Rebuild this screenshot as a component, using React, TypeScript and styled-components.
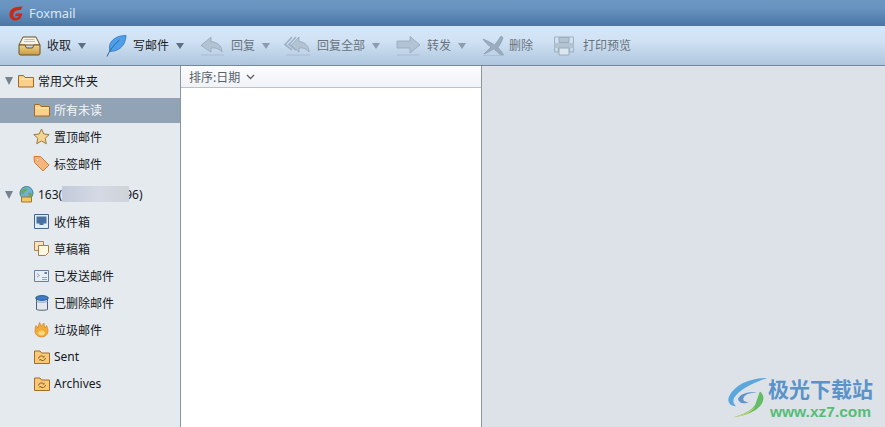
import React from 'react';
import styled, { createGlobalStyle } from 'styled-components';

const GlobalStyle = createGlobalStyle`
  html, body { margin: 0; padding: 0; height: 100%; }
  #root { height: 100%; }
  body { font-family: "Noto Sans", "Noto Sans CJK SC", sans-serif; font-size: 12px; overflow: hidden; }
`;

const Window = styled.div`
  width: 885px;
  height: 427px;
  display: flex;
  flex-direction: column;
  position: relative;
  overflow: hidden;
  background: #dce2e8;
`;

const TitleBar = styled.div`
  height: 26px;
  display: flex;
  align-items: center;
  padding-left: 9px;
  gap: 6px;
  background: linear-gradient(#6c97c3 0%, #6792bf 35%, #4a76a3 100%);
  color: #dbe6f1;
  font-size: 12.8px;
`;

const Toolbar = styled.div`
  height: 39px;
  display: flex;
  align-items: center;
  padding-left: 18px;
  background: linear-gradient(#d7e7f8 0%, #cfe1f3 40%, #afc6de 100%);
  border-bottom: 1px solid #77889a;
`;

const ToolButton = styled.div<{ $width: number }>`
  width: ${(p) => p.$width}px;
  flex: none;
  display: flex;
  align-items: center;
`;

const ToolIcon = styled.span<{ $width: number; $gap: number }>`
  width: ${(p) => p.$width}px;
  margin-right: ${(p) => p.$gap}px;
  height: 24px;
  flex: none;
  display: flex;
  align-items: center;
  justify-content: center;
`;

const ToolLabel = styled.span<{ $disabled?: boolean }>`
  color: ${(p) => (p.$disabled ? '#69737d' : '#1c2126')};
  white-space: nowrap;
  line-height: 16px;
`;

const Caret = styled.span<{ $disabled?: boolean }>`
  width: 0;
  height: 0;
  margin-left: 7px;
  border-left: 4px solid transparent;
  border-right: 4px solid transparent;
  border-top: 6px solid ${(p) => (p.$disabled ? '#8c9cae' : '#5e6f82')};
`;

const Body = styled.div`
  flex: 1;
  display: flex;
  min-height: 0;
`;

const Sidebar = styled.div`
  width: 180px;
  flex: none;
  background: #e5eaef;
  border-right: 1px solid #8a96a3;
  padding-top: 2px;
`;

const Group = styled.div`
  margin-bottom: 5px;
`;

const GroupHead = styled.div<{ $after: number }>`
  height: 25px;
  display: flex;
  align-items: center;
  padding-left: 5px;
  margin-bottom: ${(p) => p.$after}px;
  color: #15191d;
`;

const Arrow = styled.span`
  width: 0;
  height: 0;
  flex: none;
  margin-right: 4px;
  border-left: 4.5px solid transparent;
  border-right: 4.5px solid transparent;
  border-top: 8px solid #76838f;
`;

const HeadIcon = styled.span`
  width: 18px;
  height: 18px;
  flex: none;
  margin-right: 3px;
  display: flex;
  align-items: center;
  justify-content: center;
`;

const FolderRow = styled.div<{ $selected?: boolean }>`
  box-sizing: border-box;
  height: 25px;
  margin-bottom: 2px;
  display: flex;
  align-items: center;
  padding: 0 0 2px 33px;
  gap: 4px;
  background: ${(p) => (p.$selected ? '#91a3b5' : 'transparent')};
  color: ${(p) => (p.$selected ? '#f4f7fa' : '#15191d')};
`;

const RowIcon = styled.span`
  width: 17px;
  height: 18px;
  flex: none;
  display: flex;
  align-items: center;
  justify-content: center;
`;

const Redacted = styled.span`
  display: inline-block;
  position: relative;
  width: 67px;
  height: 16px;
  margin-right: -4px;
  vertical-align: -3px;
  background: linear-gradient(90deg, #c3cada 0%, #d4d9e4 55%, #cfd3d9 100%);
`;

const ListPane = styled.div`
  width: 300px;
  flex: none;
  background: #fff;
  border-right: 1px solid #8a96a3;
`;

const SortBar = styled.div`
  height: 21px;
  display: flex;
  align-items: center;
  gap: 6px;
  padding-left: 8px;
  background: linear-gradient(#fbfcfd, #f0f3f6);
  border-bottom: 1px solid #bcc2c8;
  color: #59626b;
`;

const Preview = styled.div`
  flex: 1;
  background: #dce2e8;
`;

const Watermark = styled.div`
  position: absolute;
  left: 725px;
  top: 375px;
  display: flex;
  align-items: center;
`;

const WatermarkText = styled.div`
  display: flex;
  flex-direction: column;
  margin-left: -3px;
`;

const WatermarkName = styled.span`
  color: #5b93c9;
  font-size: 21px;
  font-weight: 700;
  line-height: 26px;
  font-family: "Noto Sans CJK SC", sans-serif;
`;

const WatermarkUrl = styled.span`
  color: #55bd76;
  font-size: 15.5px;
  font-weight: 700;
  line-height: 18px;
  margin-top: 2px;
  margin-left: 2px;
  font-family: "Liberation Sans", sans-serif;
`;

const FoxLogo = () => (
  <svg width="14" height="15" viewBox="0 0 14 15">
    <path d="M13.500 .5 L8 1 C4 1.400 .8 4 .5 8 C.3 12 3 14.500 6.400 14.500 C10 14.500 12.800 12 13.200 7.500 L7 7.500 L6.200 10 L9.600 10 C9 11.500 8 12 6.800 11.800 C4.900 11.600 4 10.200 4.300 8.300 C4.600 6 6.400 4.600 9 4.200 L12 3.800 Z" fill="#c92a18" />
  </svg>
);

const InboxIcon = () => (
  <svg width="23" height="20" viewBox="0 0 23 20">
    <defs>
      <linearGradient id="tray" x1="0" y1="0" x2="0" y2="1">
        <stop offset="0" stopColor="#efd48a" />
        <stop offset="1" stopColor="#c79a45" />
      </linearGradient>
    </defs>
    <path d="M5 1h13l4 8H1z" fill="#f7f3e6" stroke="#6f4f1f" />
    <path d="M6.500 3.500h10M6 5.500h11" stroke="#bfbfb2" />
    <path d="M1 9h6l1.500 3h6L16 9h6v8.500a1.500 1.500 0 0 1-1.500 1.500h-18A1.500 1.500 0 0 1 1 17.500z" fill="url(#tray)" stroke="#6f4f1f" />
  </svg>
);

const FeatherIcon = () => (
  <svg width="21" height="22" viewBox="0 0 21 22">
    <path d="M20 .5 C13 .5 6.500 3 4 9 C3.200 11.500 3.200 14 4 16.500 C10 16.500 15.500 13.500 18 8.500 C19.500 5.500 20 3 20 .5Z" fill="#4f9fe8" stroke="#2a6cb4" strokeWidth=".7" />
    <path d="M1 21.500 C3.500 15.500 7.500 10 13.500 5" stroke="#2a68a8" strokeWidth="1" fill="none" />
  </svg>
);

const ReplyIcon = () => (
  <svg width="25" height="22" viewBox="0 0 25 22">
    <path d="M11 2 L1 10.500 L11 17 L11 13 C15 12.500 19 13.500 22 17 C22 11 17.500 7 11 6.500Z" fill="#b2c3d4" stroke="#93a8bc" strokeWidth=".8" />
    <path d="M1 20h23" stroke="#a9bbcd" strokeWidth="1.400" opacity=".7" />
  </svg>
);

const ReplyAllIcon = () => (
  <svg width="27" height="22" viewBox="0 0 27 22">
    <path d="M8 2 L1 9.500 L8 15M12 2 L5 9.500 L12 15" fill="none" stroke="#9db1c5" strokeWidth="1.600" />
    <path d="M15 2 L7 10.500 L15 17 L15 13 C19 12.500 22 13.500 25 17 C25 11 21 7 15 6.500Z" fill="#b2c3d4" stroke="#93a8bc" strokeWidth=".8" />
    <path d="M2 20h24" stroke="#a9bbcd" strokeWidth="1.400" opacity=".7" />
  </svg>
);

const ForwardIcon = () => (
  <svg width="25" height="22" viewBox="0 0 25 22">
    <path d="M1 6h13V1.500L24 10l-10 8v-5H1z" fill="#b2c3d4" stroke="#93a8bc" strokeWidth=".8" />
    <path d="M1 20h23" stroke="#a9bbcd" strokeWidth="1.400" opacity=".7" />
  </svg>
);

const DeleteIcon = () => (
  <svg width="23" height="22" viewBox="0 0 23 22">
    <path d="M1 4 C6 6 10 8 12.500 10 C15 7 17 4 19 1 L21 2.500 C20 6.500 18 10 16 12.500 C18 14.500 20 17 21.500 20 L17.500 19 C15 16.500 13 15 11.500 14 C9 15.500 6 17.500 2 19 C5 16 7.500 13.500 9 12 C6 10 3 7.500 1 4Z" fill="#9aacbe" stroke="#8497aa" strokeWidth=".6" />
    <path d="M1 20.500h21" stroke="#a9bbcd" strokeWidth="1" opacity=".7" />
  </svg>
);

const PrintIcon = () => (
  <svg width="22" height="20" viewBox="0 0 22 20">
    <path d="M6 1.500h10v5H6z" fill="#b4c3d2" stroke="#9aabbb" />
    <path d="M1.500 1h19v15h-4v-4h-11v4h-4z" fill="none" stroke="#9fb0c1" strokeWidth="1" />
    <path d="M1.500 7h19v5h-19z" fill="#b4c3d2" />
    <path d="M6 12h10v7H6z" fill="#dce6f0" stroke="#9aabbb" />
  </svg>
);

const FolderIcon = () => (
  <svg width="16" height="14" viewBox="0 0 16 14">
    <path d="M.5 13V1.500h5l1.500 2h8.500V13z" fill="#fbd08a" stroke="#a06a24" />
    <path d="M1.500 5h13" stroke="#fdebc6" />
  </svg>
);

const StarIcon = () => (
  <svg width="17" height="17" viewBox="0 0 17 17">
    <path d="M8.500 1l2.300 5 5.400.6-4 3.700 1.100 5.400-4.800-2.700-4.800 2.700 1.100-5.400-4-3.700L6.200 6z" fill="#f4d48e" stroke="#9c7a42" />
  </svg>
);

const TagIcon = () => (
  <svg width="17" height="17" viewBox="0 0 17 17">
    <path d="M1 1.500h6.500l8.500 8.500-6 6-8.500-8.500z" fill="#f5b57c" stroke="#d07a34" />
    <circle cx="4.500" cy="4.800" r="1.300" fill="#fff" stroke="#d07a34" strokeWidth=".6" />
  </svg>
);

const GlobeIcon = () => (
  <svg width="17" height="17" viewBox="0 0 17 17">
    <circle cx="8.500" cy="7" r="6.500" fill="#6fb2d6" stroke="#3f7f96" />
    <path d="M3 5c2-2 4-3 6-2.500 1 1-1 2.500-2 3.500S5 9 3.500 8zM10 7c2-.5 3.500 0 4.500 1-.5 2-2 3-3.500 3z" fill="#6da95b" />
    <path d="M3.500 11h10v5h-10z" fill="#f2c766" stroke="#a9722a" />
  </svg>
);

const InboxBoxIcon = () => (
  <svg width="15" height="15" viewBox="0 0 15 15">
    <path d="M.5.500h14v14H.5z" fill="#e4ecf4" stroke="#46668c" />
    <path d="M2.500 2.500h10v7h-3v1.500h-4V9.500h-3z" fill="#46709f" />
  </svg>
);

const DraftIcon = () => (
  <svg width="15" height="15" viewBox="0 0 15 15">
    <path d="M.5.500h9v9h-9z" fill="#f6e3c6" stroke="#ac8450" />
    <path d="M4.500 4.500h10v7l-3 3h-7z" fill="#fff6e6" stroke="#b47a30" />
  </svg>
);

const SentBoxIcon = () => (
  <svg width="15" height="12" viewBox="0 0 15 12">
    <path d="M.5.500h14v11H.5z" fill="#e6edf5" stroke="#6a82a0" />
    <path d="M3 3.500l2.500 2L3 7M8 7.500h5M8 9.500h5" stroke="#7d92ad" strokeWidth=".8" fill="none" />
    <path d="M10.500 2h2.500v2h-2.500z" fill="#6a82a0" />
  </svg>
);

const TrashIcon = () => (
  <svg width="14" height="16" viewBox="0 0 14 16">
    <path d="M1.500 4v10.500c1.500 1 9.500 1 11 0V4z" fill="#e4e8ee" stroke="#4d5f75" />
    <ellipse cx="7" cy="3" rx="6.300" ry="2.400" fill="#3f7cc4" stroke="#2a5a94" />
    <path d="M1.500 6.500c2 1 9 1 11 0" stroke="#7da5d2" fill="none" />
  </svg>
);

const FlameIcon = () => (
  <svg width="15" height="16" viewBox="0 0 15 16">
    <path d="M1 9c0-2 .5-4 1-5.500.8.800 1.500 1.800 1.800 2.500C4.500 4 5 2 5.500.5 6.500 2 7 3 7.500 4.500 8.300 3.200 9 2 9.800 1c.5 1.800.8 3.500 1 5 .7-.8 1.300-1.500 1.700-2.500.8 1.800 1.500 3.500 1.500 5.500 0 3.500-3 6-6.500 6S1 12.500 1 9z" fill="#f2ab3a" stroke="#d4831e" strokeWidth=".7" />
    <path d="M4 11c.5-1.500 2-2.500 3.500-2.500S10.500 9.500 11 11c-.5 1.800-2 2.500-3.500 2.500S4.500 12.800 4 11z" fill="#fbd97c" />
  </svg>
);

const SyncFolderIcon = () => (
  <svg width="16" height="14" viewBox="0 0 16 14">
    <path d="M.5 13.500V1h5.500l1.500 2h8v10.500z" fill="#f9c878" stroke="#a66c22" />
    <path d="M4.500 8.500a3 3 0 0 1 5-1.800M11.500 8a3 3 0 0 1-5 1.800" stroke="#8e5f22" fill="none" />
    <path d="M10.500 5.500v2h-2zM5.500 11V9h2z" fill="#8e5f22" />
  </svg>
);

const SwirlLogo = () => (
  <svg width="46" height="42" viewBox="0 0 46 46">
    <path d="M44 1C26 1 8 8 2 22c-2 6 2 10 8 10-4-3-4-8 0-12C17 12 30 6 44 1z" fill="#5ba7dd" />
    <path d="M12 24c3-7 15-9 22-6-6-1-14 0-16 5-1 3 2 5 6 4-5 3-11 2-12-3z" fill="#5f95cb" />
    <path d="M36 16c6 4 5 12-2 18-7 6-17 9-27 10 10-3 20-7 24-14 2-5 3-9 5-14z" fill="#63bd65" />
    <path d="M7 44c9-2 17-5 24-12-4 7-13 11-24 12z" fill="#d7dc62" />
  </svg>
);

const tools = [
  { icon: <InboxIcon />, w: 23, gap: 6, label: '收取', caret: true, width: 88, off: false },
  { icon: <FeatherIcon />, w: 21, gap: 6, label: '写邮件', caret: true, width: 94, off: false },
  { icon: <ReplyIcon />, w: 25, gap: 6, label: '回复', caret: true, width: 84, off: true },
  { icon: <ReplyAllIcon />, w: 27, gap: 6, label: '回复全部', caret: true, width: 112, off: true },
  { icon: <ForwardIcon />, w: 25, gap: 6, label: '转发', caret: true, width: 86, off: true },
  { icon: <DeleteIcon />, w: 23, gap: 4, label: '删除', caret: false, width: 71, off: true },
  { icon: <PrintIcon />, w: 22, gap: 8, label: '打印预览', caret: false, width: 90, off: true },
];

const accountFolders = [
  { icon: <InboxBoxIcon />, name: '收件箱' },
  { icon: <DraftIcon />, name: '草稿箱' },
  { icon: <SentBoxIcon />, name: '已发送邮件' },
  { icon: <TrashIcon />, name: '已删除邮件' },
  { icon: <FlameIcon />, name: '垃圾邮件' },
  { icon: <SyncFolderIcon />, name: 'Sent' },
  { icon: <SyncFolderIcon />, name: 'Archives' },
];

export default function App() {
  return (
    <Window>
      <GlobalStyle />
      <TitleBar>
        <FoxLogo />
        <span>Foxmail</span>
      </TitleBar>
      <Toolbar>
        {tools.map((t) => (
          <ToolButton key={t.label} $width={t.width}>
            <ToolIcon $width={t.w} $gap={t.gap}>
              {t.icon}
            </ToolIcon>
            <ToolLabel $disabled={t.off}>{t.label}</ToolLabel>
            {t.caret && <Caret $disabled={t.off} />}
          </ToolButton>
        ))}
      </Toolbar>
      <Body>
        <Sidebar>
          <Group>
            <GroupHead $after={5}>
              <Arrow />
              <HeadIcon>
                <FolderIcon />
              </HeadIcon>
              常用文件夹
            </GroupHead>
            <FolderRow $selected>
              <RowIcon>
                <FolderIcon />
              </RowIcon>
              所有未读
            </FolderRow>
            <FolderRow>
              <RowIcon>
                <StarIcon />
              </RowIcon>
              置顶邮件
            </FolderRow>
            <FolderRow>
              <RowIcon>
                <TagIcon />
              </RowIcon>
              标签邮件
            </FolderRow>
          </Group>
          <Group>
            <GroupHead $after={3}>
              <Arrow />
              <HeadIcon>
                <GlobeIcon />
              </HeadIcon>
              <span>
                163(
                <Redacted />
                96)
              </span>
            </GroupHead>
            {accountFolders.map((f) => (
              <FolderRow key={f.name}>
                <RowIcon>{f.icon}</RowIcon>
                {f.name}
              </FolderRow>
            ))}
          </Group>
        </Sidebar>
        <ListPane>
          <SortBar>
            排序:日期
            <svg width="9" height="6" viewBox="0 0 9 6">
              <path d="M1 1l3.500 3.500L8 1" fill="none" stroke="#59626b" strokeWidth="1.300" />
            </svg>
          </SortBar>
        </ListPane>
        <Preview />
      </Body>
      <Watermark>
        <SwirlLogo />
        <WatermarkText>
          <WatermarkName>极光下载站</WatermarkName>
          <WatermarkUrl>www.xz7.com</WatermarkUrl>
        </WatermarkText>
      </Watermark>
    </Window>
  );
}
